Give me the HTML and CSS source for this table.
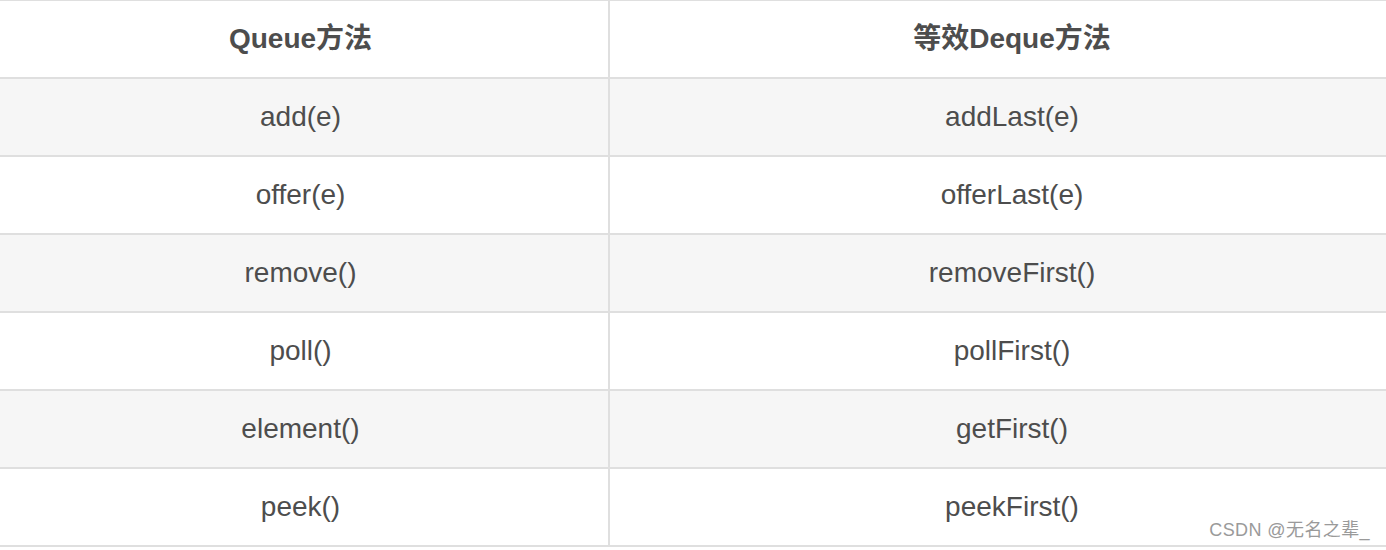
FILE: index.html
```html
<!DOCTYPE html>
<html lang="zh">
<head>
<meta charset="utf-8">
<title>Queue vs Deque</title>
<link rel="stylesheet" href="styles.css">
</head>
<body>
<table class="methods">
  <colgroup><col class="c1"><col class="c2"></colgroup>
  <thead>
    <tr><th>Queue方法</th><th>等效Deque方法</th></tr>
  </thead>
  <tbody>
    <tr><td>add(e)</td><td>addLast(e)</td></tr>
    <tr><td>offer(e)</td><td>offerLast(e)</td></tr>
    <tr><td>remove()</td><td>removeFirst()</td></tr>
    <tr><td>poll()</td><td>pollFirst()</td></tr>
    <tr><td>element()</td><td>getFirst()</td></tr>
    <tr><td>peek()</td><td>peekFirst()</td></tr>
  </tbody>
</table>
<div class="watermark">CSDN @无名之辈_</div>
</body>
</html>
```
FILE: styles.css
```css
html, body {
  margin: 0;
  padding: 0;
  background: #ffffff;
  overflow: hidden;
}
body {
  width: 1386px;
  height: 550px;
  position: relative;
  font-family: "Liberation Sans", Arial, "Noto Sans CJK SC", sans-serif;
  color: #4d4d4d;
}
.methods {
  border-collapse: collapse;
  table-layout: fixed;
  width: 1423px;
  margin-left: -9px;
  margin-top: -1px;
}
.methods .c1 { width: 617px; }
.methods .c2 { width: 806px; }
.methods th,
.methods td {
  border: 2px solid #dfdfdf;
  height: 76px;
  padding: 0;
  text-align: center;
  vertical-align: middle;
  font-size: 28px;
  line-height: 1;
}
.methods th {
  font-weight: bold;
}
.methods tbody tr:nth-child(odd) td {
  background: #f6f6f6;
}
.watermark {
  position: absolute;
  right: 16px;
  bottom: 9px;
  font-size: 18px;
  letter-spacing: 0.4px;
  color: #9a9a9a;
  font-family: "Liberation Sans", Arial, "Noto Sans CJK SC", sans-serif;
}
```
